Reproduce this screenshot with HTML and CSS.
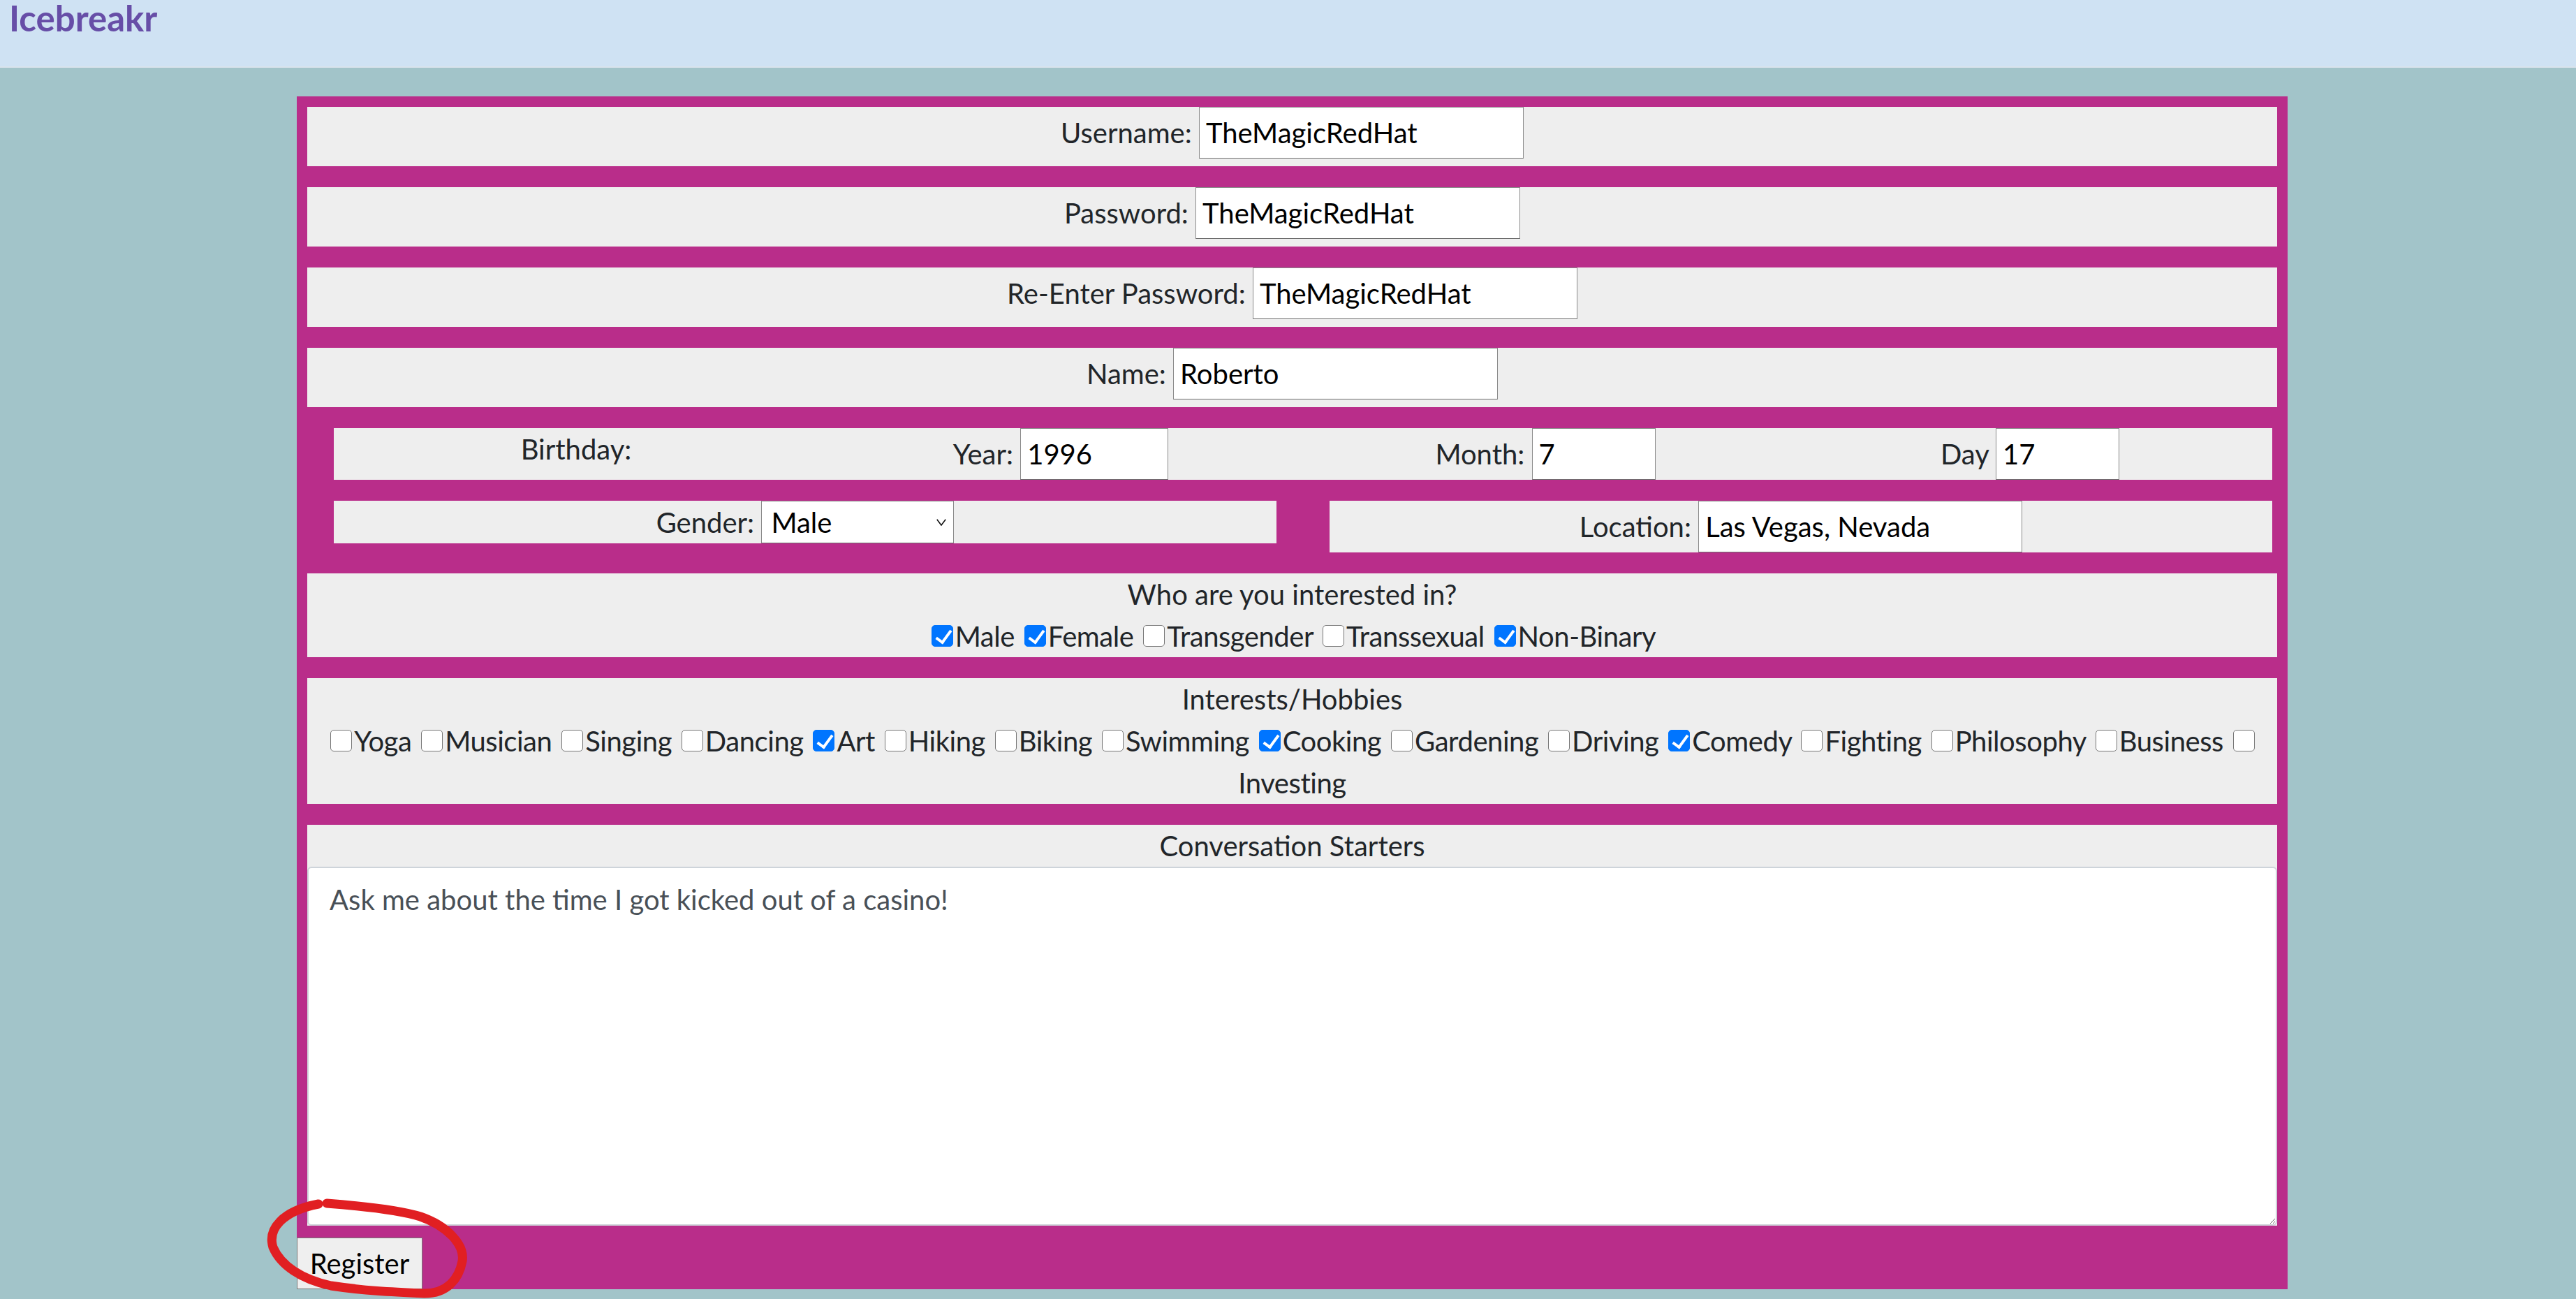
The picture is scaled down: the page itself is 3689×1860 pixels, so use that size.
FILE: index.html
```html
<!DOCTYPE html>
<html lang="en">
<head>
<meta charset="utf-8">
<title>Icebreakr</title>
<link rel="stylesheet" href="styles.css">
</head>
<body>
<header class="topbar"><h1 class="logo">Icebreakr</h1></header>
<main>
<form class="signup">
  <div class="fields">
    <div class="panel text-row"><label>Username: <input class="text w-long" type="text" value="TheMagicRedHat"></label></div>
    <div class="panel text-row"><label>Password: <input class="text w-long" type="text" value="TheMagicRedHat"></label></div>
    <div class="panel text-row"><label>Re-Enter Password: <input class="text w-long" type="text" value="TheMagicRedHat"></label></div>
    <div class="panel text-row"><label>Name: <input class="text w-long" type="text" value="Roberto"></label></div>
    <div class="birthday-group">
      <div class="panel birthday">
        <div class="cell">Birthday:</div>
        <div class="cell"><label>Year: <input class="text w-year" type="text" value="1996"></label></div>
        <div class="cell"><label>Month: <input class="text w-short" type="text" value="7"></label></div>
        <div class="cell"><label>Day <input class="text w-short" type="text" value="17"></label></div>
      </div>
      <div class="pair">
        <div class="panel"><label>Gender: <span class="select-wrap"><select class="choice"><option>Male</option><option>Female</option><option>Non-Binary</option></select><svg class="chev" viewBox="0 0 14 10"><path d="M0.8 0.8 L7 9 L13.2 0.8" fill="none" stroke="#111" stroke-width="1.6"/></svg></span></label></div>
        <div class="panel"><label>Location: <input class="text w-loc" type="text" value="Las Vegas, Nevada"></label></div>
      </div>
    </div>
    <div class="panel">
      <div>Who are you interested in?</div>
      <div class="options"><input class="cb" type="checkbox" checked>Male <input class="cb" type="checkbox" checked>Female <input class="cb" type="checkbox">Transgender <input class="cb" type="checkbox">Transsexual <input class="cb" type="checkbox" checked>Non-Binary</div>
    </div>
    <div class="panel">
      <div>Interests/Hobbies</div>
      <div class="options"><input class="cb" type="checkbox">Yoga <input class="cb" type="checkbox">Musician <input class="cb" type="checkbox">Singing <input class="cb" type="checkbox">Dancing <input class="cb" type="checkbox" checked>Art <input class="cb" type="checkbox">Hiking <input class="cb" type="checkbox">Biking <input class="cb" type="checkbox">Swimming <input class="cb" type="checkbox" checked>Cooking <input class="cb" type="checkbox">Gardening <input class="cb" type="checkbox">Driving <input class="cb" type="checkbox" checked>Comedy <input class="cb" type="checkbox">Fighting <input class="cb" type="checkbox">Philosophy <input class="cb" type="checkbox">Business <input class="cb" type="checkbox">Investing</div>
    </div>
    <div class="panel">
      <div>Conversation Starters</div>
      <textarea class="starter">Ask me about the time I got kicked out of a casino!</textarea>
    </div>
  </div>
  <button class="register" type="button">Register</button>
</form>
</main>
<svg class="annotation" viewBox="370 1700 320 160"><path d="M468 1723 C520 1727 570 1732 602 1742 C640 1755 666 1782 662 1806 C657 1832 640 1852 608 1852 C560 1850 520 1848 474 1841 C432 1832 402 1812 391 1786 C383 1760 404 1734 456 1724" fill="none" stroke="#e11f22" stroke-width="13" stroke-linecap="round" stroke-linejoin="round"/></svg>
</body>
</html>
```
FILE: styles.css
```css
* {
  box-sizing: border-box;
}

body {
  margin: 0;
  background: #a2c4c9;
  font-family: Lato, "Open Sans", sans-serif;
  font-size: 40px;
  line-height: 60px;
  color: #212529;
}

.topbar {
  height: 97px;
  background: #cfe2f3;
  border-bottom: 2px solid #d9e3ec;
}

.logo {
  margin: 0;
  padding-left: 13px;
  font-size: 51px;
  line-height: 1;
  font-weight: 700;
  color: #674ea7;
}

.signup {
  width: 2851px;
  margin: 41px 0 0 425px;
  background: #b92d8a;
}

.fields {
  display: flex;
  flex-direction: column;
  gap: 30px;
  padding: 15px 15px 0;
}

.panel {
  background: #eeeeee;
  text-align: center;
}

.text-row {
  padding-bottom: 11px;
}

.text {
  height: 74px;
  margin: 0;
  padding: 0 9px;
  border: 1px solid #8a8a8a;
  border-bottom-color: #6e6e6e;
  border-radius: 0;
  background: #fff;
  font: inherit;
  line-height: normal;
  color: #000;
  vertical-align: baseline;
}

.w-long { width: 465px; }
.w-year { width: 212px; }
.w-short { width: 177px; }
.w-loc { width: 464px; }

.birthday-group {
  display: flex;
  flex-direction: column;
  gap: 30px;
  margin: 0 7px 0 38px;
}

.birthday {
  display: grid;
  grid-template-columns: repeat(4, 1fr);
  align-items: start;
}

.pair {
  display: grid;
  grid-template-columns: 1fr 1fr;
  column-gap: 76px;
  align-items: start;
}

.select-wrap {
  position: relative;
  display: inline-block;
}

.choice {
  appearance: none;
  -webkit-appearance: none;
  width: 276px;
  height: 61px;
  margin: 0;
  padding: 0 0 0 13px;
  border: 1px solid #8a8a8a;
  border-bottom-color: #6e6e6e;
  border-radius: 0;
  background: #fff;
  font: inherit;
  line-height: normal;
  color: #000;
  vertical-align: baseline;
}

.chev {
  position: absolute;
  right: 11px;
  top: 26px;
  width: 14px;
  height: 10px;
  pointer-events: none;
}

.options {
  letter-spacing: -0.45px;
}

.cb {
  appearance: none;
  -webkit-appearance: none;
  position: relative;
  width: 31px;
  height: 31px;
  margin: 0 3px 0 4px;
  border: 1px solid #767676;
  border-radius: 5px;
  background: #fff;
  vertical-align: baseline;
}

.cb:checked {
  background: #0075ff;
  border-color: #0075ff;
}

.cb:checked::after {
  content: "";
  position: absolute;
  left: 10px;
  top: 2px;
  width: 9px;
  height: 19px;
  border: solid #fff;
  border-width: 0 4px 4px 0;
  transform: rotate(36deg);
}

.starter {
  display: block;
  width: 100%;
  height: 514px;
  margin: 0;
  padding: 15px 30px;
  border: 2px solid #ced4da;
  border-radius: 6px;
  background: #fff;
  font: inherit;
  color: #495057;
  resize: both;
}

.register {
  display: block;
  margin-top: 17px;
  width: 180px;
  height: 74px;
  padding: 0;
  border: 1px solid #767676;
  border-radius: 0;
  background: #efefef;
  font: inherit;
  line-height: normal;
  color: #000;
}

.annotation {
  position: absolute;
  left: 370px;
  top: 1700px;
  width: 320px;
  height: 160px;
  pointer-events: none;
}
```
